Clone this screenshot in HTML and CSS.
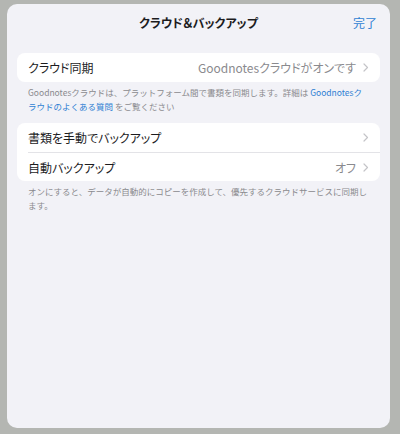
FILE: index.html
```html
<!DOCTYPE html>
<html lang="ja">
<head>
  <meta charset="UTF-8">
  <title>クラウド＆バックアップ</title>
  <link rel="stylesheet" href="styles.css">
</head>
<body>
  <div class="sheet">
    <div class="header">
      <span class="title">クラウド＆バックアップ</span>
      <span class="done">完了</span>
    </div>

    <div class="group">
      <div class="row">
        <span class="label">クラウド同期</span>
        <span class="value">Goodnotesクラウドがオンです</span>
        <svg class="chev" width="6" height="9" viewBox="0 0 6 9"><path d="M1 1l3.5 3.5L1 8" fill="none" stroke="#c4c4c8" stroke-width="1.2" stroke-linecap="round" stroke-linejoin="round"/></svg>
      </div>
    </div>
    <p class="note">Goodnotesクラウドは、プラットフォーム間で書類を同期します。詳細は <span class="link">Goodnotesクラウドのよくある質問</span> をご覧ください</p>

    <div class="group">
      <div class="row">
        <span class="label">書類を手動でバックアップ</span>
        <svg class="chev" width="6" height="9" viewBox="0 0 6 9"><path d="M1 1l3.5 3.5L1 8" fill="none" stroke="#c4c4c8" stroke-width="1.2" stroke-linecap="round" stroke-linejoin="round"/></svg>
      </div>
      <div class="row">
        <span class="label">自動バックアップ</span>
        <span class="value">オフ</span>
        <svg class="chev" width="6" height="9" viewBox="0 0 6 9"><path d="M1 1l3.5 3.5L1 8" fill="none" stroke="#c4c4c8" stroke-width="1.2" stroke-linecap="round" stroke-linejoin="round"/></svg>
      </div>
    </div>
    <p class="note">オンにすると、データが自動的にコピーを作成して、優先するクラウドサービスに同期します。</p>
  </div>
</body>
</html>
```

FILE: styles.css
```css
html, body {
  margin: 0;
  height: 100%;
}

body {
  font-family: "Noto Sans CJK JP", "Noto Sans", sans-serif;
  background-color: #b4b6b2;
  padding: 4px 10px 6px 7px;
  box-sizing: border-box;
}

.sheet {
  height: 100%;
  background-color: #f2f2f7;
  border-radius: 10px;
  padding: 0 10px;
  box-sizing: border-box;
}

.header {
  position: relative;
  height: 37px;
  display: flex;
  align-items: center;
  justify-content: center;
  margin-bottom: 12px;
  font-feature-settings: "palt";
}

.title {
  font-size: 12px;
  font-weight: bold;
  color: #1c1c1e;
}

.done {
  position: absolute;
  right: 3px;
  top: 10px;
  font-size: 12px;
  color: #2f7fd3;
}

.group {
  background-color: #fff;
  border-radius: 8px;
  font-feature-settings: "palt";
}

.row {
  display: flex;
  align-items: center;
  height: 29px;
  box-sizing: border-box;
  margin-left: 11px;
  padding-right: 11px;
  font-size: 12px;
}

.row + .row {
  border-top: 1px solid #e3e3e7;
}

.label {
  flex: 1;
  color: #1c1c1e;
}

.value {
  color: #8a8a8e;
}

.chev {
  margin-left: 7px;
}

.note {
  margin: 3px 0 10px;
  padding: 0 12px 0 11px;
  font-size: 8.5px;
  line-height: 14px;
  color: #8a8a8e;
}

.link {
  color: #2f7fd3;
}
```
